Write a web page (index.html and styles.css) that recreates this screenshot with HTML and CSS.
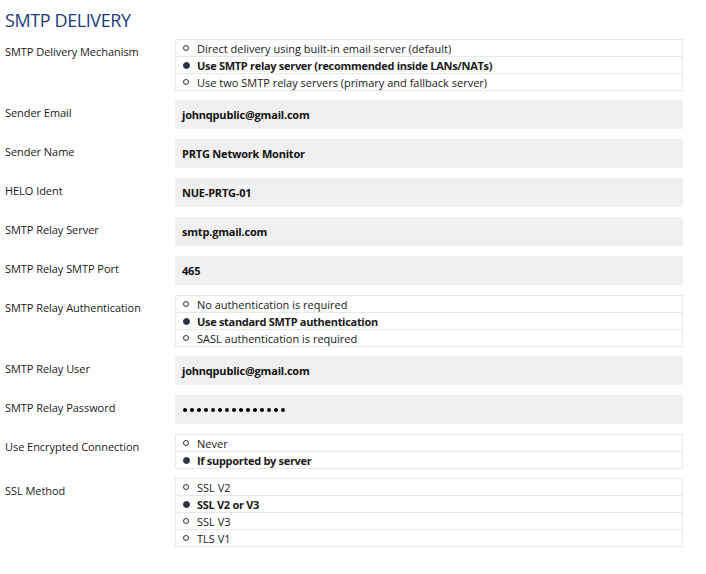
FILE: index.html
```html
<!DOCTYPE html>
<html>
<head>
<meta charset="utf-8">
<link rel="stylesheet" href="styles.css">
</head>
<body>
<div class="page">
  <h1 class="title">SMTP DELIVERY</h1>
  <div class="form">
    <div class="row radio-row">
      <div class="label">SMTP Delivery Mechanism</div>
      <div class="group">
        <div class="opt"><span class="dot"></span>Direct delivery using built-in email server (default)</div>
        <div class="opt sel"><span class="dot"></span>Use SMTP relay server (recommended inside LANs/NATs)</div>
        <div class="opt"><span class="dot"></span>Use two SMTP relay servers (primary and fallback server)</div>
      </div>
    </div>
    <div class="row">
      <div class="label">Sender Email</div>
      <div class="field">johnqpublic@gmail.com</div>
    </div>
    <div class="row">
      <div class="label">Sender Name</div>
      <div class="field">PRTG Network Monitor</div>
    </div>
    <div class="row">
      <div class="label">HELO Ident</div>
      <div class="field">NUE-PRTG-01</div>
    </div>
    <div class="row">
      <div class="label">SMTP Relay Server</div>
      <div class="field">smtp.gmail.com</div>
    </div>
    <div class="row">
      <div class="label">SMTP Relay SMTP Port</div>
      <div class="field">465</div>
    </div>
    <div class="row radio-row">
      <div class="label">SMTP Relay Authentication</div>
      <div class="group">
        <div class="opt"><span class="dot"></span>No authentication is required</div>
        <div class="opt sel"><span class="dot"></span>Use standard SMTP authentication</div>
        <div class="opt"><span class="dot"></span>SASL authentication is required</div>
      </div>
    </div>
    <div class="row">
      <div class="label">SMTP Relay User</div>
      <div class="field">johnqpublic@gmail.com</div>
    </div>
    <div class="row">
      <div class="label">SMTP Relay Password</div>
      <div class="field pw"><span class="pd"></span><span class="pd"></span><span class="pd"></span><span class="pd"></span><span class="pd"></span><span class="pd"></span><span class="pd"></span><span class="pd"></span><span class="pd"></span><span class="pd"></span><span class="pd"></span><span class="pd"></span><span class="pd"></span><span class="pd"></span><span class="pd"></span></div>
    </div>
    <div class="row radio-row">
      <div class="label">Use Encrypted Connection</div>
      <div class="group">
        <div class="opt"><span class="dot"></span>Never</div>
        <div class="opt sel"><span class="dot"></span>If supported by server</div>
      </div>
    </div>
    <div class="row radio-row">
      <div class="label">SSL Method</div>
      <div class="group">
        <div class="opt"><span class="dot"></span>SSL V2</div>
        <div class="opt sel"><span class="dot"></span>SSL V2 or V3</div>
        <div class="opt"><span class="dot"></span>SSL V3</div>
        <div class="opt"><span class="dot"></span>TLS V1</div>
      </div>
    </div>
  </div>
</div>
</body>
</html>
```
FILE: styles.css
```css
html, body {
  margin: 0;
  padding: 0;
  background: #ffffff;
}
body {
  font-family: "Open Sans", "Noto Sans", sans-serif;
  color: #1a1a1a;
}
.page {
  padding: 9px 23px 0 5px;
}
.title {
  margin: 0 0 8px 0;
  font-size: 18px;
  font-weight: 400;
  line-height: 22px;
  color: #1e3a78;
  letter-spacing: -0.4px;
}
.form {
  display: flex;
  flex-direction: column;
}
.row {
  display: grid;
  grid-template-columns: 170px 1fr;
  margin-bottom: 10px;
}
.row.radio-row {
  margin-bottom: 9px;
}
.label {
  font-size: 11px;
  line-height: 14px;
  padding-top: 6px;
  color: #1a1a1a;
  letter-spacing: -0.05px;
}
.field {
  background: #f0f0f0;
  height: 29px;
  display: flex;
  align-items: center;
  padding-left: 7px;
  font-size: 11px;
  font-weight: 700;
  color: #111111;
  letter-spacing: -0.2px;
}
.pw {
  gap: 3px;
  padding-left: 8px;
}
.pd {
  width: 4px;
  height: 4px;
  border-radius: 50%;
  background: #000000;
}
.group {
  border: 1px solid #e8e8e8;
}
.opt {
  height: 16px;
  display: flex;
  align-items: center;
  font-size: 11px;
  color: #1a1a1a;
  padding-left: 7px;
}
.opt + .opt {
  border-top: 1px solid #e8e8e8;
}
.opt.sel {
  font-weight: 700;
  letter-spacing: -0.3px;
}
.dot {
  width: 4px;
  height: 4px;
  border: 1px solid #2d3146;
  border-radius: 50%;
  margin-right: 8px;
  flex: none;
}
.opt.sel .dot {
  background: #2d3146;
  width: 5px;
  height: 5px;
  border: 1px solid #2d3146;
  margin-right: 7px;
  letter-spacing: 0;
}
```
